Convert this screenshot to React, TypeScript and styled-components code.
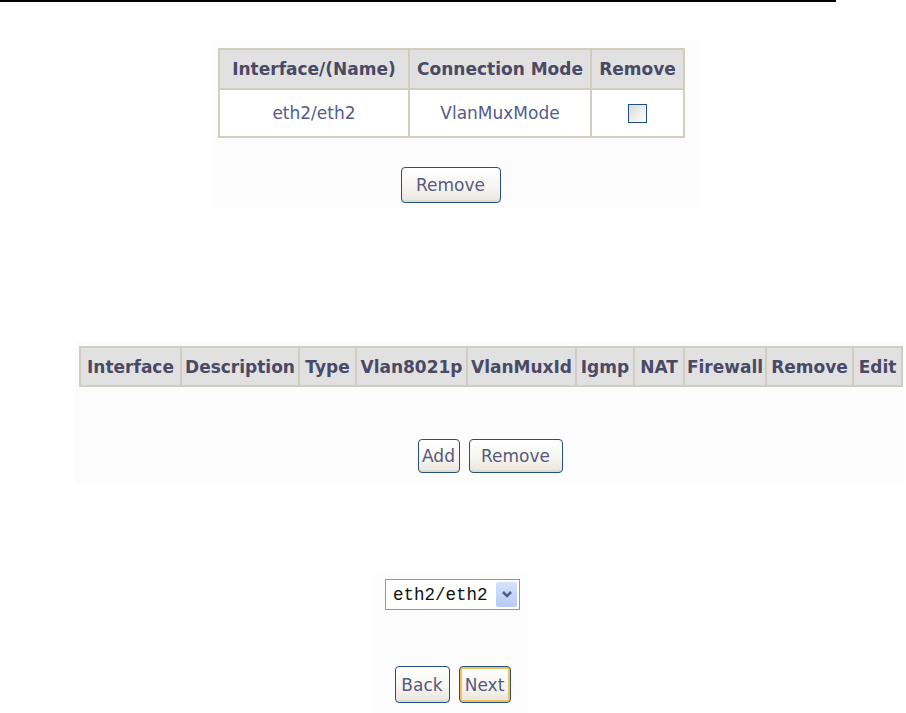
import React from "react";
import styled, { createGlobalStyle } from "styled-components";

const Global = createGlobalStyle`
  html, body { margin: 0; padding: 0; background: #ffffff; }
  body { font-family: "DejaVu Sans", Verdana, sans-serif; }
`;

const Page = styled.div`
  width: 906px;
  height: 713px;
  overflow: hidden;
  display: flex;
  flex-direction: column;
  align-items: flex-start;
`;

const Rule = styled.div`
  width: 836px;
  height: 2px;
  background: #000;
  flex: none;
`;

const Shot = styled.div<{ $left: number; $top: number; $w: number; $h: number; $pl: number; $pt: number }>`
  margin-left: ${(p) => p.$left}px;
  margin-top: ${(p) => p.$top}px;
  width: ${(p) => p.$w}px;
  height: ${(p) => p.$h}px;
  padding-left: ${(p) => p.$pl}px;
  padding-top: ${(p) => p.$pt}px;
  box-sizing: border-box;
  background: #fcfcfc;
  display: flex;
  flex-direction: column;
  align-items: flex-start;
  flex: none;
`;

const Table = styled.table<{ $w: number }>`
  width: ${(p) => p.$w}px;
  border-collapse: collapse;
  border: 2px solid #d2cebf;
  table-layout: fixed;
`;

const Th = styled.th<{ $w: number; $h: number }>`
  width: ${(p) => p.$w}px;
  height: ${(p) => p.$h}px;
  padding: 0;
  border: 2px solid #d2cebf;
  background: #e1e1e1;
  color: #4a4a66;
  font-family: "DejaVu Sans", Verdana, sans-serif;
  font-weight: bold;
  font-size: 17px;
  text-align: center;
  white-space: nowrap;
  box-sizing: border-box;
`;

const Td = styled.td`
  height: 46px;
  padding: 0;
  border: 2px solid #d2cebf;
  background: #ffffff;
  color: #525c8e;
  font-size: 17px;
  text-align: center;
  white-space: nowrap;
`;

const Check = styled.span`
  display: inline-block;
  vertical-align: middle;
  width: 17px;
  height: 17px;
  border: 1px solid #1c5180;
  background: linear-gradient(135deg, #dcdcd5 0%, #f4f4f2 70%, #ffffff 100%);
`;

const ButtonRow = styled.div<{ $w: number; $mt: number }>`
  width: ${(p) => p.$w}px;
  margin-top: ${(p) => p.$mt}px;
  display: flex;
  justify-content: center;
  gap: 9px;
`;

const Button = styled.button<{ $w: number; $h: number; $focus?: boolean }>`
  width: ${(p) => p.$w}px;
  height: ${(p) => p.$h}px;
  padding: 0;
  border: 1px solid #24507e;
  border-radius: 4px;
  background: linear-gradient(#ffffff 0%, #f6f5f0 55%, #e8e6dc 100%);
  box-shadow: ${(p) => (p.$focus ? "inset 0 0 0 2px #f6bf5a" : "inset 0 -2px 0 #dedbd0")};
  color: #57597f;
  font-family: "DejaVu Sans", Verdana, sans-serif;
  font-size: 17px;
  cursor: pointer;
`;

const SelectBox = styled.div`
  position: relative;
  width: 135px;
  height: 31px;
  box-sizing: border-box;
  border: 1px solid #7f9db9;
  background: #fff;
  display: flex;
  align-items: center;
  padding-left: 7px;
  font-family: "Liberation Mono", "DejaVu Sans Mono", monospace;
  font-size: 17.5px;
  color: #111;
`;

const Arrow = styled.div`
  position: absolute;
  right: 2px;
  top: 2px;
  bottom: 2px;
  width: 21px;
  border-radius: 2px;
  background: linear-gradient(#d6e2fc, #b7cbf5);
  display: flex;
  align-items: center;
  justify-content: center;
`;

const Stack = styled.div<{ $w: number }>`
  width: ${(p) => p.$w}px;
  display: flex;
  flex-direction: column;
  align-items: center;
`;

export default function App() {
  const cols2: [string, number][] = [
    ["Interface", 101],
    ["Description", 118],
    ["Type", 57],
    ["Vlan8021p", 111],
    ["VlanMuxId", 109],
    ["Igmp", 58],
    ["NAT", 50],
    ["Firewall", 82],
    ["Remove", 87],
    ["Edit", 49],
  ];
  return (
    <Page>
      <Global />
      <Rule />
      <Shot $left={212} $top={38} $w={485} $h={168} $pl={6} $pt={8}>
        <Table $w={465}>
          <thead>
            <tr>
              <Th $w={190} $h={40}>Interface/(Name)</Th>
              <Th $w={182} $h={40}>Connection Mode</Th>
              <Th $w={93} $h={40}>Remove</Th>
            </tr>
          </thead>
          <tbody>
            <tr>
              <Td>eth2/eth2</Td>
              <Td>VlanMuxMode</Td>
              <Td>
                <Check />
              </Td>
            </tr>
          </tbody>
        </Table>
        <ButtonRow $w={465} $mt={29}>
          <Button $w={100} $h={36}>Remove</Button>
        </ButtonRow>
      </Shot>
      <Shot $left={75} $top={134} $w={830} $h={142} $pl={4} $pt={4}>
        <Table $w={822}>
          <thead>
            <tr>
              {cols2.map(([t, w]) => (
                <Th key={t} $w={w} $h={39}>
                  {t}
                </Th>
              ))}
            </tr>
          </thead>
        </Table>
        <ButtonRow $w={822} $mt={52}>
          <Button $w={42} $h={34}>Add</Button>
          <Button $w={94} $h={34}>Remove</Button>
        </ButtonRow>
      </Shot>
      <Shot $left={375} $top={88} $w={153} $h={143} $pl={0} $pt={7}>
        <Stack $w={155}>
          <SelectBox>
            eth2/eth2
            <Arrow>
              <svg width="12" height="9" viewBox="0 0 12 9">
                <path d="M2 2 L6 6 L10 2" stroke="#4d6185" strokeWidth="2.6" fill="none" />
              </svg>
            </Arrow>
          </SelectBox>
          <ButtonRow $w={155} $mt={56}>
            <Button $w={55} $h={37}>Back</Button>
            <Button $w={52} $h={37} $focus>Next</Button>
          </ButtonRow>
        </Stack>
      </Shot>
    </Page>
  );
}
